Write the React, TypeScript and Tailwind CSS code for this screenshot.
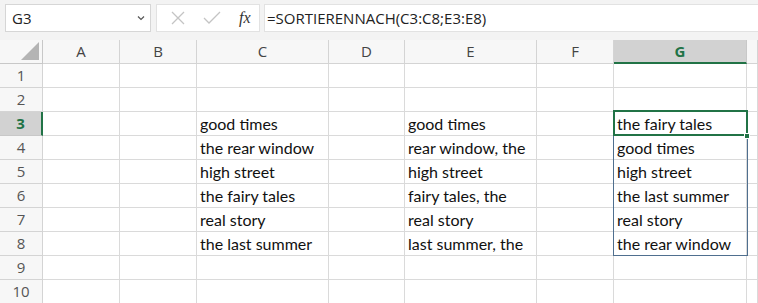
import React from 'react'

const cols = ['A', 'B', 'C', 'D', 'E', 'F', 'G', '']
const colC = ['', '', 'good times', 'the rear window', 'high street', 'the fairy tales', 'real story', 'the last summer', '', '']
const colE = ['', '', 'good times', 'rear window, the', 'high street', 'fairy tales, the', 'real story', 'last summer, the', '', '']
const colG = ['', '', 'the fairy tales', 'good times', 'high street', 'the last summer', 'real story', 'the rear window', '', '']

const uiFont = { fontFamily: '"Open Sans", "Noto Sans", sans-serif' }
const cellFont = { fontFamily: 'Lato, "Noto Sans", sans-serif' }

export default function App() {
  return (
    <div className="w-[758px] h-[303px] overflow-hidden bg-white relative">
      {/* Formula bar */}
      <div className="h-[40px] bg-[#f3f3f3] flex items-start pt-[4px] pl-[5px]" style={uiFont}>
        <div className="w-[146px] h-[28px] bg-white border border-[#d6d6d6] flex items-center justify-between pl-[6px] pr-[5px]">
          <span className="text-[15px] text-[#222]">G3</span>
          <svg width="8" height="6" viewBox="0 0 8 6"><path d="M1 1.5 L4 4.5 L7 1.5" fill="none" stroke="#555" strokeWidth="1.2" /></svg>
        </div>
        <div className="ml-[5px] w-[104px] h-[28px] bg-white border border-[#e2e2e2] flex items-center">
          <svg className="ml-[14px]" width="14" height="14" viewBox="0 0 14 14"><path d="M1 1 L13 13 M13 1 L1 13" stroke="#c4c4c4" strokeWidth="1.3" /></svg>
          <svg className="ml-[18px]" width="18" height="14" viewBox="0 0 18 14"><path d="M1 7 L6 12 L17 1" fill="none" stroke="#c4c4c4" strokeWidth="1.3" /></svg>
          <span className="ml-[18px] text-[16px] italic text-[#333]" style={{ fontFamily: '"Liberation Serif", serif' }}>fx</span>
        </div>
        <div className="ml-[4px] flex-1 h-[28px] bg-white border border-[#e2e2e2] border-r-0 flex items-center pl-[2px]">
          <span className="text-[15px] text-[#222]">=SORTIERENNACH(C3:C8;E3:E8)</span>
        </div>
      </div>

      {/* Grid */}
      <div className="relative grid grid-cols-[43px_77px_77px_132px_76px_132px_77px_133px_1fr] grid-rows-[24px_repeat(10,24px)]">
        {/* header row */}
        <div className="bg-[#f7f7f7] border-r border-b border-[#c8c8c8] relative">
          <svg className="absolute right-[3px] bottom-[3px]" width="18" height="18" viewBox="0 0 18 18"><path d="M18 0 L18 18 L0 18 Z" fill="#b4b4b4" /></svg>
        </div>
        {cols.map((c, i) => (
          <div
            key={i}
            className={
              c === 'G'
                ? 'bg-[#d2d2d2] border-r border-[#c8c8c8] border-b-2 border-b-[#217346] flex items-center justify-center text-[15px] font-bold text-[#217346]'
                : 'bg-[#f7f7f7] border-r border-b border-[#d4d4d4] flex items-center justify-center text-[15px] text-[#444]'
            }
            style={uiFont}
          >
            {c}
          </div>
        ))}

        {/* rows */}
        {Array.from({ length: 10 }).map((_, r) => {
          const sel = r === 2
          return (
            <React.Fragment key={r}>
              <div
                className={
                  sel
                    ? 'bg-[#d2d2d2] border-r-2 border-r-[#217346] border-b border-[#c8c8c8] flex items-center justify-center text-[15px] font-bold text-[#217346]'
                    : 'bg-[#f7f7f7] border-r border-b border-[#d4d4d4] flex items-center justify-center text-[15px] text-[#555]'
                }
                style={uiFont}
              >
                {r + 1}
              </div>
              {cols.map((c, ci) => {
                const text = c === 'C' ? colC[r] : c === 'E' ? colE[r] : c === 'G' ? colG[r] : ''
                return (
                  <div
                    key={ci}
                    className="border-r border-b border-[#dadada] pl-[3px] pt-[1px] text-[16px] leading-[22px] text-[#111] whitespace-nowrap overflow-hidden"
                    style={cellFont}
                  >
                    {text}
                  </div>
                )
              })}
            </React.Fragment>
          )
        })}

        {/* spill range G3:G8 */}
        <div className="absolute left-[613px] top-[71px] w-[135px] h-[145px] border border-[#4f6f8f] pointer-events-none" />
        {/* active cell G3 */}
        <div className="absolute left-[613px] top-[70px] w-[135px] h-[26px] border-2 border-[#217346] pointer-events-none" />
        <div className="absolute left-[744px] top-[93px] w-[6px] h-[6px] bg-[#217346] border border-white pointer-events-none" />
      </div>
    </div>
  )
}
